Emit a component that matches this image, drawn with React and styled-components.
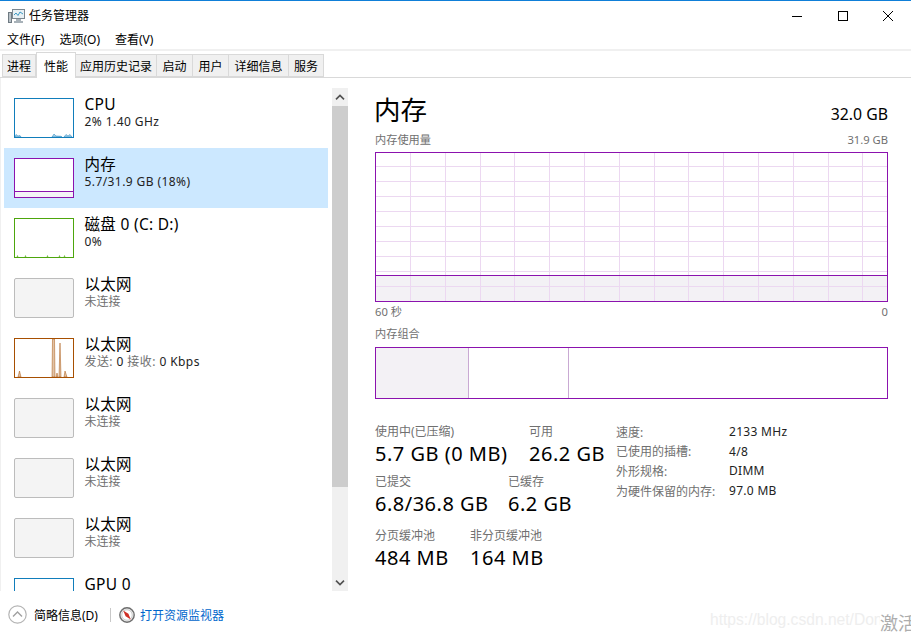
import React from "react";
import styled, { createGlobalStyle } from "styled-components";

const FONT = `"Noto Sans", "Noto Sans CJK SC", sans-serif`;

const GlobalStyle = createGlobalStyle`
  html, body { margin: 0; padding: 0; background: #fff; }
  body { font-family: ${FONT}; color: #000; overflow: hidden; }
  * { box-sizing: border-box; }
`;

const TABS = [
  { label: "进程", width: 34 },
  { label: "性能", width: 40, active: true },
  { label: "应用历史记录", width: 81 },
  { label: "启动", width: 36 },
  { label: "用户", width: 36 },
  { label: "详细信息", width: 60 },
  { label: "服务", width: 35 },
];

const DEVICES = [
  { name: "CPU", sub: "2% 1.40 GHz", color: "#117dbb", kind: "cpu" },
  { name: "内存", sub: "5.7/31.9 GB (18%)", color: "#8b12ae", kind: "mem", selected: true },
  { name: "磁盘 0 (C: D:)", sub: "0%", color: "#4da60c", kind: "disk" },
  { name: "以太网", sub: "未连接", off: true, muted: true },
  { name: "以太网", sub: "发送: 0 接收: 0 Kbps", color: "#a74f01", kind: "net", split: true },
  { name: "以太网", sub: "未连接", off: true, muted: true },
  { name: "以太网", sub: "未连接", off: true, muted: true },
  { name: "以太网", sub: "未连接", off: true, muted: true },
  { name: "GPU 0", sub: "", color: "#117dbb" },
];

const SPARKS = {
  cpu: "M0 38 L1 35.5 L3 37 L5 36.5 L6 38 Z M37 38 L39 35 L41 37 L46 37.3 L47 38 Z M49 38 L51 35.5 L53 37 L55 35.5 L57 38 Z",
  disk: "M2 38 L2.5 36.5 L3 38 Z M10 38 L10.5 36.5 L11 38 Z M32 38 L32.5 36.5 L33 38 Z M44 38 L44.5 36.5 L45 38 Z M49 38 L49.5 36.5 L50 38 Z",
  net: "M3 38 L4.5 32 L6 38 Z M37 38 L37.5 0 L39.5 0 L40 38 Z M41 38 L42 34 L43 38 Z M44 38 L45 4 L46 38 Z M49 38 L50 32 L52 38 Z",
};

function Spark({ kind, color }) {
  if (kind === "mem") {
    return (
      <ThumbSvg viewBox="0 0 58 38">
        <rect x="0" y="32" width="58" height="6" fill="#f4f2f6" />
        <line x1="0" y1="32.5" x2="58" y2="32.5" stroke={color} />
      </ThumbSvg>
    );
  }
  if (!SPARKS[kind]) return null;
  return (
    <ThumbSvg viewBox="0 0 58 38">
      <path d={SPARKS[kind]} fill={color} fillOpacity="0.35" stroke={color} strokeWidth="0.6" strokeOpacity="0.8" />
    </ThumbSvg>
  );
}

function AppIcon() {
  return (
    <svg width="17" height="16" viewBox="0 0 17 16">
      <rect x="4.5" y="1.5" width="12" height="9" fill="#e8f0f4" stroke="#7b8790" />
      <path d="M6 7 L8 5 L10 7.5 L12 4 L15 6" fill="none" stroke="#3d9ac4" strokeWidth="1" />
      <rect x="0.5" y="4.5" width="3" height="10" fill="#b9c2c8" stroke="#6f7a82" />
      <path d="M8 11 H13 V13 H15 V15 H6 V13 H8 Z" fill="#a8b2b9" />
    </svg>
  );
}

function WindowGlyph({ kind }) {
  return (
    <svg width="10" height="10" viewBox="0 0 10 10" fill="none" stroke="#000" strokeWidth="1">
      {kind === "min" && <line x1="0" y1="5.5" x2="10" y2="5.5" />}
      {kind === "max" && <rect x="0.5" y="0.5" width="9" height="9" />}
      {kind === "close" && <path d="M0 0 L10 10 M10 0 L0 10" />}
    </svg>
  );
}

function UsageGraph() {
  const verticals = Array.from({ length: 14 }, (_, i) => 35 + i * 34.8);
  const horizontals = Array.from({ length: 9 }, (_, i) => 14.5 + i * 15);
  return (
    <GraphSvg viewBox="0 0 513 150">
      <rect x="0" y="123" width="513" height="27" fill="#f3f1f5" />
      {verticals.map((x) => (
        <line key={x} x1={Math.round(x) + 0.5} y1="0" x2={Math.round(x) + 0.5} y2="150" stroke="#ecd8f1" />
      ))}
      {horizontals.map((y) => (
        <line key={y} x1="0" y1={y} x2="513" y2={y} stroke="#ecd8f1" />
      ))}
      <line x1="0" y1="123.5" x2="513" y2="123.5" stroke="#8b12ae" />
      <rect x="0.5" y="0.5" width="512" height="149" fill="none" stroke="#8b12ae" />
    </GraphSvg>
  );
}

function CollapseIcon() {
  return (
    <svg width="19" height="19" viewBox="0 0 19 19" fill="none">
      <circle cx="9.5" cy="9.5" r="8.7" fill="#fff" stroke="#b4b4b4" strokeWidth="1.2" />
      <path d="M5 11.5 L9.5 7 L14 11.5" stroke="#a0a0a0" strokeWidth="1.4" />
    </svg>
  );
}

function MonitorIcon() {
  return (
    <svg width="16" height="16" viewBox="0 0 16 16" fill="none">
      <circle cx="8" cy="8" r="7.2" fill="#ececec" stroke="#6d6d6d" strokeWidth="1.4" />
      <circle cx="8" cy="8" r="5.2" fill="#fff" stroke="#c4c4c4" strokeWidth="0.8" />
      <path d="M4.2 3.4 L9.4 6.8 L11.8 12.6 L6.6 9.2 Z" fill="#cf2f25" />
    </svg>
  );
}

function ScrollArrow({ up }) {
  return (
    <svg width="10" height="6" viewBox="0 0 10 6" fill="none" stroke="#505050" strokeWidth="1.6">
      <path d={up ? "M1 5.4 L5 1.4 L9 5.4" : "M1 .6 L5 4.6 L9 .6"} />
    </svg>
  );
}

export default function App() {
  return (
    <Window>
      <GlobalStyle />
      <TitleBar>
        <AppIcon />
        <TitleText>任务管理器</TitleText>
        <WindowButtons>
          <WindowButton><WindowGlyph kind="min" /></WindowButton>
          <WindowButton><WindowGlyph kind="max" /></WindowButton>
          <WindowButton><WindowGlyph kind="close" /></WindowButton>
        </WindowButtons>
      </TitleBar>

      <MenuBar>
        <MenuItem>文件(F)</MenuItem>
        <MenuItem>选项(O)</MenuItem>
        <MenuItem>查看(V)</MenuItem>
      </MenuBar>

      <TabStrip>
        {TABS.map((tab) => (
          <Tab key={tab.label} $w={tab.width} $active={tab.active}>{tab.label}</Tab>
        ))}
      </TabStrip>

      <Main>
        <Sidebar>
          <DeviceList>
            {DEVICES.map((d, i) => (
              <DeviceRow key={i} $selected={d.selected}>
                <Thumb $color={d.color} $off={d.off}>
                  <Spark kind={d.kind} color={d.color} />
                </Thumb>
                <DeviceText>
                  <DeviceName>{d.name}</DeviceName>
                  <DeviceSub $muted={d.muted}>
                    {d.split ? (
                      <>
                        <Dim>发送:</Dim> 0 <Dim>接收:</Dim> 0 Kbps
                      </>
                    ) : d.sub}
                  </DeviceSub>
                </DeviceText>
              </DeviceRow>
            ))}
          </DeviceList>
          <ScrollBar>
            <ScrollButton><ScrollArrow up /></ScrollButton>
            <ScrollTrack><ScrollThumb /></ScrollTrack>
            <ScrollButton><ScrollArrow /></ScrollButton>
          </ScrollBar>
        </Sidebar>

        <Detail>
          <DetailHeader>
            <DetailTitle>内存</DetailTitle>
            <DetailTotal>32.0 GB</DetailTotal>
          </DetailHeader>
          <CaptionRow $top={5}>
            <span>内存使用量</span>
            <span>31.9 GB</span>
          </CaptionRow>
          <GraphBox><UsageGraph /></GraphBox>
          <CaptionRow $top={3}>
            <span>60 秒</span>
            <span>0</span>
          </CaptionRow>
          <CaptionRow $top={8}>
            <span>内存组合</span>
          </CaptionRow>
          <CompositionBar>
            <CompositionPart $w={93} $fill />
            <CompositionPart $w={100} />
            <CompositionPart $w={318} $last />
          </CompositionBar>

          <Stats>
            <StatColumns>
              <StatRow $gap={7}>
                <Stat $w={154}><StatLabel>使用中(已压缩)</StatLabel><StatValue>5.7 GB (0 MB)</StatValue></Stat>
                <Stat><StatLabel>可用</StatLabel><StatValue>26.2 GB</StatValue></Stat>
              </StatRow>
              <StatRow $gap={11}>
                <Stat $w={133}><StatLabel>已提交</StatLabel><StatValue>6.8/36.8 GB</StatValue></Stat>
                <Stat><StatLabel>已缓存</StatLabel><StatValue>6.2 GB</StatValue></Stat>
              </StatRow>
              <StatRow $gap={0}>
                <Stat $w={95}><StatLabel>分页缓冲池</StatLabel><StatValue>484 MB</StatValue></Stat>
                <Stat><StatLabel>非分页缓冲池</StatLabel><StatValue>164 MB</StatValue></Stat>
              </StatRow>
            </StatColumns>
            <SpecTable>
              <SpecKey>速度:</SpecKey><SpecValue>2133 MHz</SpecValue>
              <SpecKey>已使用的插槽:</SpecKey><SpecValue>4/8</SpecValue>
              <SpecKey>外形规格:</SpecKey><SpecValue>DIMM</SpecValue>
              <SpecKey>为硬件保留的内存:</SpecKey><SpecValue>97.0 MB</SpecValue>
            </SpecTable>
          </Stats>
        </Detail>
      </Main>

      <Footer>
        <CollapseIcon />
        <FooterText>简略信息(D)</FooterText>
        <FooterDivider />
        <MonitorIcon />
        <FooterLink>打开资源监视器</FooterLink>
      </Footer>

      <Watermark>https://blog.csdn.net/Don</Watermark>
      <ActivateMark>激活</ActivateMark>
    </Window>
  );
}

const Window = styled.div`
  position: relative;
  width: 911px;
  height: 638px;
  display: flex;
  flex-direction: column;
  overflow: hidden;
  background: #fff;
`;

const TitleBar = styled.div`
  height: 31px;
  flex: none;
  display: flex;
  align-items: center;
  padding-left: 8px;
  border-top: 1px solid #0f7fd8;
`;

const TitleText = styled.span`
  margin-left: 4px;
  font-size: 12px;
  line-height: 16px;
`;

const WindowButtons = styled.div`
  margin-left: auto;
  display: flex;
`;

const WindowButton = styled.div`
  width: 45.5px;
  display: flex;
  justify-content: center;
`;

const MenuBar = styled.div`
  height: 19px;
  flex: none;
  display: flex;
  align-items: center;
  padding-left: 7px;
  gap: 15px;
  border-bottom: 1px solid #f0f0f0;
`;

const MenuItem = styled.span`
  font-size: 12px;
  line-height: 16px;
  white-space: nowrap;
`;

const TabStrip = styled.div`
  height: 28px;
  flex: none;
  display: flex;
  align-items: flex-end;
  padding-left: 2px;
  border-top: 1px solid #f0f0f0;
  border-bottom: 1px solid #d9d9d9;
`;

const Tab = styled.div`
  width: ${(p) => p.$w}px;
  height: ${(p) => (p.$active ? 26 : 23)}px;
  margin-bottom: ${(p) => (p.$active ? -1 : 0)}px;
  display: flex;
  align-items: center;
  justify-content: center;
  font-size: 12px;
  background: ${(p) => (p.$active ? "#fff" : "#f0f0f0")};
  border: 1px solid #d9d9d9;
  border-bottom: ${(p) => (p.$active ? "none" : "1px solid #d9d9d9")};
  border-left: ${(p) => (p.$active ? "1px solid #d9d9d9" : "none")};
  &:first-child { border-left: 1px solid #d9d9d9; }
  position: relative;
  z-index: ${(p) => (p.$active ? 1 : 0)};
`;

const Main = styled.div`
  flex: 1;
  min-height: 0;
  display: flex;
`;

const Sidebar = styled.div`
  width: 348px;
  flex: none;
  display: flex;
  padding-top: 10px;
  overflow: hidden;
  border-left: 1px solid #f0f0f0;
`;

const DeviceList = styled.div`
  width: 331px;
  padding-left: 3px;
  flex: none;
  overflow: hidden;
`;

const DeviceRow = styled.div`
  width: 324px;
  height: 60px;
  display: flex;
  align-items: center;
  padding-left: 10px;
  background: ${(p) => (p.$selected ? "#cce8ff" : "transparent")};
`;

const Thumb = styled.div`
  width: 60px;
  height: 40px;
  flex: none;
  border: 1px solid ${(p) => (p.$off ? "#bcbcbc" : p.$color)};
  border-radius: ${(p) => (p.$off ? 2 : 0)}px;
  background: ${(p) => (p.$off ? "#f4f4f4" : "#fff")};
`;

const ThumbSvg = styled.svg`
  display: block;
  width: 58px;
  height: 38px;
`;

const DeviceText = styled.div`
  margin-left: 10.5px;
  align-self: flex-start;
  padding-top: 6px;
`;

const DeviceName = styled.div`
  font-size: 15.5px;
  line-height: 20px;
  letter-spacing: 0.3px;
  white-space: nowrap;
`;

const DeviceSub = styled.div`
  font-size: 12px;
  line-height: 16px;
  letter-spacing: ${(p) => (p.$muted ? 0 : 0.42)}px;
  white-space: nowrap;
  color: ${(p) => (p.$muted ? "#707070" : "#222")};
`;

const Dim = styled.span`
  color: #707070;
`;

const ScrollBar = styled.div`
  width: 16px;
  flex: none;
  display: flex;
  flex-direction: column;
  background: #f0f0f0;
`;

const ScrollButton = styled.div`
  height: 17px;
  flex: none;
  display: flex;
  align-items: center;
  justify-content: center;
`;

const ScrollTrack = styled.div`
  flex: 1;
  padding-top: 1px;
`;

const ScrollThumb = styled.div`
  height: 381px;
  background: #cdcdcd;
`;

const Detail = styled.div`
  flex: 1;
  min-width: 0;
  padding: 14px 23px 0 27px;
`;

const DetailHeader = styled.div`
  height: 36px;
  display: flex;
  justify-content: space-between;
  align-items: flex-end;
`;

const DetailTitle = styled.div`
  font-size: 26.5px;
  line-height: 36px;
  margin-left: -1px;
`;

const DetailTotal = styled.div`
  font-size: 15.8px;
  line-height: 22px;
  margin-bottom: 3px;
`;

const CaptionRow = styled.div`
  display: flex;
  justify-content: space-between;
  margin-top: ${(p) => p.$top}px;
  font-size: 11.2px;
  line-height: 14px;
  color: #707070;
`;

const GraphBox = styled.div`
  margin-top: 5px;
  height: 150px;
`;

const GraphSvg = styled.svg`
  display: block;
  width: 513px;
  height: 150px;
`;

const CompositionBar = styled.div`
  margin-top: 6px;
  height: 52px;
  display: flex;
  border: 1px solid #8b12ae;
`;

const CompositionPart = styled.div`
  width: ${(p) => p.$w}px;
  background: ${(p) => (p.$fill ? "#f3f1f5" : "#fff")};
  border-right: ${(p) => (p.$last ? "none" : "1px solid #c9a9d3")};
`;

const Stats = styled.div`
  margin-top: 23px;
  display: flex;
`;

const StatColumns = styled.div`
  width: 241px;
  flex: none;
  padding-top: 3px;
`;

const StatRow = styled.div`
  display: flex;
  margin-bottom: ${(p) => p.$gap}px;
  white-space: nowrap;
`;

const Stat = styled.div`
  width: ${(p) => (p.$w ? `${p.$w}px` : "auto")};
  flex: none;
`;

const StatLabel = styled.div`
  font-size: 12px;
  line-height: 14px;
  color: #707070;
`;

const StatValue = styled.div`
  margin-top: 1px;
  font-size: 20px;
  line-height: 28px;
  letter-spacing: 0.5px;
`;

const SpecTable = styled.div`
  display: grid;
  grid-template-columns: 113px auto;
  grid-auto-rows: 19.6px;
  align-items: center;
  font-size: 12px;
`;

const SpecKey = styled.div`
  color: #707070;
  white-space: nowrap;
`;

const SpecValue = styled.div`
  color: #222;
  letter-spacing: 0.3px;
  white-space: nowrap;
`;

const Footer = styled.div`
  height: 47px;
  flex: none;
  display: flex;
  align-items: center;
  padding-left: 8px;
`;

const FooterText = styled.span`
  margin-left: 7px;
  font-size: 12px;
  width: 76px;
  white-space: nowrap;
`;

const FooterDivider = styled.div`
  width: 1px;
  height: 14px;
  background: #c8c8c8;
  margin-right: 8px;
`;

const FooterLink = styled.span`
  margin-left: 5px;
  font-size: 12px;
  color: #0066cc;
`;

const Watermark = styled.div`
  position: absolute;
  left: 710px;
  top: 610px;
  width: 170px;
  overflow: hidden;
  font-family: "Liberation Sans", sans-serif;
  font-size: 15.6px;
  line-height: 20px;
  color: #eeeeee;
  white-space: nowrap;
`;

const ActivateMark = styled.div`
  position: absolute;
  left: 880px;
  top: 611px;
  font-size: 18px;
  line-height: 24px;
  color: #adadad;
  white-space: nowrap;
`;
